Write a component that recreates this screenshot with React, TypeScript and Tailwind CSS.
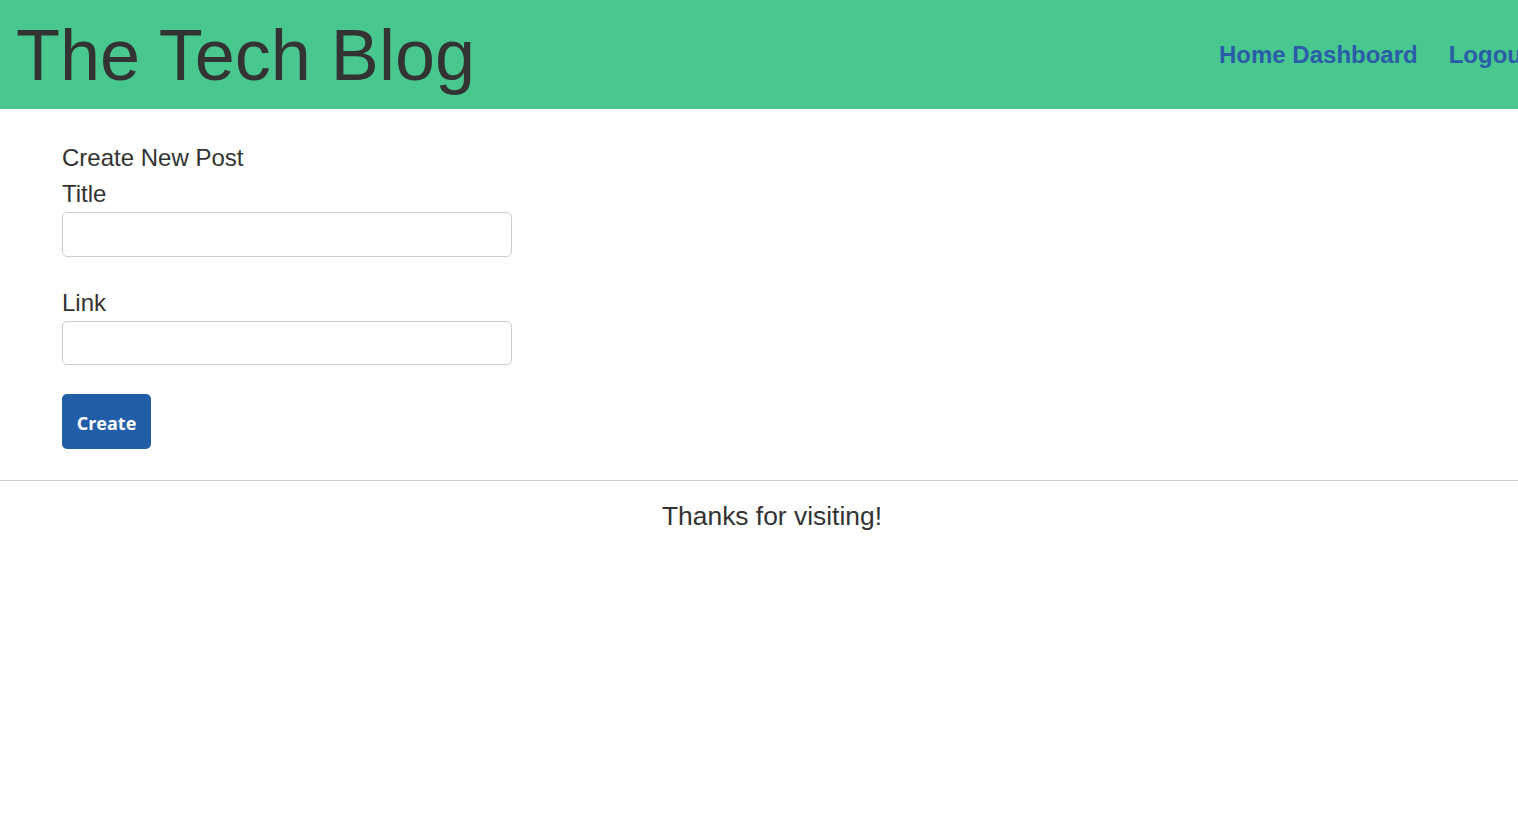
export default function App() {
  return (
    <div className="w-full overflow-hidden bg-white min-h-[816px]" style={{ fontFamily: '"Liberation Sans", Arial, sans-serif' }}>
      <div className="w-[1544px]">
        <header className="h-[109px] bg-[#48c78e] flex items-center pl-[16px] pr-[14px]">
          <h1 className="text-[72px] leading-none text-[#333333]">The Tech Blog</h1>
          <nav className="ml-auto flex items-center gap-[31px] text-[24px] font-bold text-[#2a5ca8]">
            <a>Home Dashboard</a>
            <a>Logout</a>
          </nav>
        </header>
        <main className="pl-[62px] pt-[31px] text-[#333333]">
          <h2 className="text-[24px] leading-[36px]">Create New Post</h2>
          <label className="block text-[24px] leading-[36px]">Title</label>
          <input className="block w-[450px] h-[45px] border border-[#cccccc] rounded-[5px] outline-none" />
          <label className="block text-[24px] leading-[36px] mt-[28px]">Link</label>
          <input className="block w-[450px] h-[44px] border border-[#cccccc] rounded-[5px] outline-none" />
          <button
            className="mt-[29px] w-[89px] h-[55px] pt-[3px] rounded-[5px] bg-[#225ea8] text-white font-bold text-[18px]"
            style={{ fontFamily: '"Open Sans", sans-serif' }}
          >
            Create
          </button>
        </main>
        <hr className="mt-[31px] border-0 border-t border-[#cccccc]" />
        <footer className="text-center text-[26.4px] leading-[36px] text-[#333333] mt-[17px]">Thanks for visiting!</footer>
      </div>
    </div>
  );
}
